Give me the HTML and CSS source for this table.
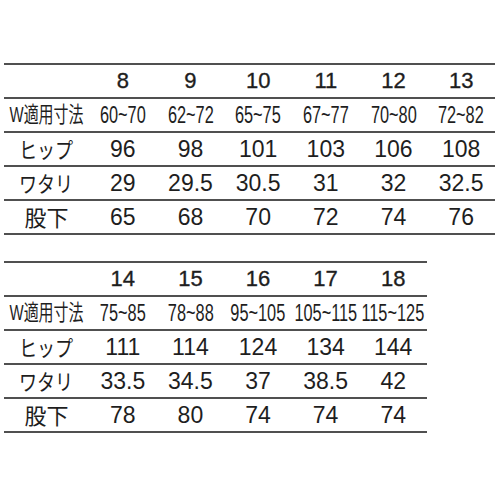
FILE: index.html
```html
<!DOCTYPE html>
<html lang="ja">
<head>
<meta charset="utf-8">
<link rel="stylesheet" href="styles.css">
</head>
<body>
<div class="page">
  <table class="size t1">
    <colgroup><col class="lab"><col><col><col><col><col><col></colgroup>
    <tr class="head"><td></td><td>8</td><td>9</td><td>10</td><td>11</td><td>12</td><td>13</td></tr>
    <tr class="w"><td><span class="cond wl">W適用寸法</span></td><td><span class="cond">60~70</span></td><td><span class="cond">62~72</span></td><td><span class="cond">65~75</span></td><td><span class="cond">67~77</span></td><td><span class="cond">70~80</span></td><td><span class="cond">72~82</span></td></tr>
    <tr><td><span class="jp kana">ヒップ</span></td><td>96</td><td>98</td><td>101</td><td>103</td><td>106</td><td>108</td></tr>
    <tr><td><span class="jp kana">ワタリ</span></td><td>29</td><td>29.5</td><td>30.5</td><td>31</td><td>32</td><td>32.5</td></tr>
    <tr><td><span class="jp">股下</span></td><td>65</td><td>68</td><td>70</td><td>72</td><td>74</td><td>76</td></tr>
  </table>
  <table class="size t2">
    <colgroup><col class="lab"><col><col><col><col><col></colgroup>
    <tr class="head"><td></td><td>14</td><td>15</td><td>16</td><td>17</td><td>18</td></tr>
    <tr class="w"><td><span class="cond wl">W適用寸法</span></td><td><span class="cond">75~85</span></td><td><span class="cond">78~88</span></td><td><span class="cond">95~105</span></td><td><span class="cond">105~115</span></td><td><span class="cond">115~125</span></td></tr>
    <tr><td><span class="jp kana">ヒップ</span></td><td>111</td><td>114</td><td>124</td><td>134</td><td>144</td></tr>
    <tr><td><span class="jp kana">ワタリ</span></td><td>33.5</td><td>34.5</td><td>37</td><td>38.5</td><td>42</td></tr>
    <tr><td><span class="jp">股下</span></td><td>78</td><td>80</td><td>74</td><td>74</td><td>74</td></tr>
  </table>
</div>
</body>
</html>
```
FILE: styles.css
```css
html, body {
  margin: 0;
  padding: 0;
  background: #fff;
}
.page {
  padding: 63px 0 0 4px;
  display: flex;
  flex-direction: column;
  gap: 26px;
  align-items: flex-start;
}
.size {
  border-collapse: collapse;
  table-layout: fixed;
  font-family: "Liberation Sans", Arial, "Noto Sans CJK JP", sans-serif;
  color: #1e1e1e;
}
.t1 { width: 491px; }
.t2 { width: 423px; }
.lab { width: 85px; }
.size td {
  height: 32px;
  padding: 0;
  text-align: center;
  vertical-align: middle;
  border-top: 2px solid #505050;
  border-bottom: 2px solid #505050;
  font-size: 23px;
  line-height: 1;
  white-space: nowrap;
  overflow: visible;
}
.head td {
  font-size: 22px;
  -webkit-text-stroke: 0.35px #1e1e1e;
}
.cond {
  display: block;
  margin: 0 -16px;
  font-size: 23px;
  transform: scaleX(0.71);
  text-align: center;
}
.cond.wl {
  font-family: "Liberation Sans", "Noto Sans CJK JP", sans-serif;
  font-size: 22px;
  font-feature-settings: "palt";
  transform: scaleX(0.68);
}
.jp {
  display: inline-block;
  font-family: "Noto Sans CJK JP", sans-serif;
  font-size: 22px;
}
.kana {
  transform: scaleX(0.82);
}
```
